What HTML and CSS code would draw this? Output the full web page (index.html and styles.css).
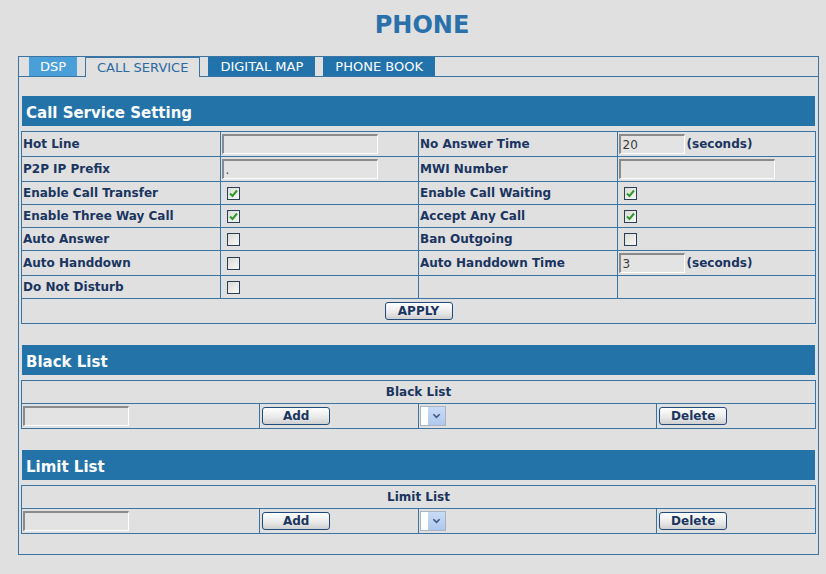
FILE: index.html
```html
<!DOCTYPE html>
<html lang="en">
<head>
  <meta charset="UTF-8" />
  <title>PHONE</title>
  <link rel="stylesheet" href="styles.css">
</head>
<body>

  <h1 class="title">PHONE</h1>

  <div class="frame">
    <div class="tabs">
      <span class="tab tab--light">DSP</span>
      <span class="tab tab--active">CALL SERVICE</span>
      <span class="tab">DIGITAL MAP</span>
      <span class="tab">PHONE BOOK</span>
    </div>

    <div class="bar bar--first">Call Service Setting</div>
    <table class="grid">
      <tr class="row-input">
        <td class="label">Hot Line</td>
        <td><input class="field" type="text" value=""></td>
        <td class="label">No Answer Time</td>
        <td><input class="field field--short" type="text" value="20"><span class="unit">(seconds)</span></td>
      </tr>
      <tr class="row-input">
        <td class="label">P2P IP Prefix</td>
        <td><input class="field" type="text" value="."></td>
        <td class="label">MWI Number</td>
        <td><input class="field" type="text" value=""></td>
      </tr>
      <tr>
        <td class="label">Enable Call Transfer</td>
        <td><span class="chk chk--on"><svg viewBox="0 0 11 11"><path d="M2 5.5 L4.5 8 L9 2.5" /></svg></span></td>
        <td class="label">Enable Call Waiting</td>
        <td><span class="chk chk--on"><svg viewBox="0 0 11 11"><path d="M2 5.5 L4.5 8 L9 2.5" /></svg></span></td>
      </tr>
      <tr>
        <td class="label">Enable Three Way Call</td>
        <td><span class="chk chk--on"><svg viewBox="0 0 11 11"><path d="M2 5.5 L4.5 8 L9 2.5" /></svg></span></td>
        <td class="label">Accept Any Call</td>
        <td><span class="chk chk--on"><svg viewBox="0 0 11 11"><path d="M2 5.5 L4.5 8 L9 2.5" /></svg></span></td>
      </tr>
      <tr>
        <td class="label">Auto Answer</td>
        <td><span class="chk"></span></td>
        <td class="label">Ban Outgoing</td>
        <td><span class="chk"></span></td>
      </tr>
      <tr class="row-tall">
        <td class="label">Auto Handdown</td>
        <td><span class="chk"></span></td>
        <td class="label">Auto Handdown Time</td>
        <td><input class="field field--short" type="text" value="3"><span class="unit">(seconds)</span></td>
      </tr>
      <tr>
        <td class="label">Do Not Disturb</td>
        <td><span class="chk"></span></td>
        <td></td>
        <td></td>
      </tr>
      <tr class="row-tall">
        <td class="center" colspan="4"><button class="btn btn--apply">APPLY</button></td>
      </tr>
    </table>

    <div class="bar">Black List</div>
    <table class="grid list">
      <colgroup>
        <col class="col-wide"><col class="col-narrow"><col class="col-wide"><col class="col-narrow">
      </colgroup>
      <tr>
        <td class="label center" colspan="4">Black List</td>
      </tr>
      <tr class="row-input">
        <td><input class="field field--list" type="text" value=""></td>
        <td><button class="btn">Add</button></td>
        <td><span class="dropdown"><span class="dropdown__arrow"><svg viewBox="0 0 10 6"><path d="M1.5 1 L5 4.5 L8.5 1" /></svg></span></span></td>
        <td><button class="btn">Delete</button></td>
      </tr>
    </table>

    <div class="bar">Limit List</div>
    <table class="grid list">
      <colgroup>
        <col class="col-wide"><col class="col-narrow"><col class="col-wide"><col class="col-narrow">
      </colgroup>
      <tr>
        <td class="label center" colspan="4">Limit List</td>
      </tr>
      <tr class="row-input">
        <td><input class="field field--list" type="text" value=""></td>
        <td><button class="btn">Add</button></td>
        <td><span class="dropdown"><span class="dropdown__arrow"><svg viewBox="0 0 10 6"><path d="M1.5 1 L5 4.5 L8.5 1" /></svg></span></span></td>
        <td><button class="btn">Delete</button></td>
      </tr>
    </table>
  </div>

</body>
</html>
```

FILE: styles.css
```css
html, body {
  margin: 0;
  padding: 0;
  background: #e0e0e0;
  font-family: "DejaVu Sans", Verdana, sans-serif;
  color: #1a3560;
}

.title {
  margin: 0;
  padding-top: 11px;
  padding-left: 18px;
  height: 56px;
  box-sizing: border-box;
  text-align: center;
  font-size: 24px;
  font-weight: bold;
  color: #2a70aa;
}

.frame {
  margin-left: 18px;
  width: 799px;
  height: 497px;
  border: 1px solid #3a74a2;
}

.tabs {
  display: flex;
  gap: 8px;
  height: 19px;
  padding-left: 10px;
  border-bottom: 1px solid #3a74a2;
}

.tab {
  display: flex;
  align-items: center;
  justify-content: center;
  height: 19px;
  padding: 0 12px;
  background: #2272ac;
  color: #ffffff;
  font-size: 13px;
  white-space: nowrap;
}

.tab--light {
  background: #4b9fd9;
  width: 24px;
}

.tab--active {
  background: #e0e0e0;
  color: #2a6aa0;
  height: 20px;
  box-sizing: border-box;
  border: 1px solid #3a74a2;
  border-bottom: none;
  padding: 0 11px;
  margin-bottom: -1px;
}

.bar {
  margin: 21px 3px 0 3px;
  height: 30px;
  padding: 3px 0 0 4px;
  box-sizing: border-box;
  display: flex;
  align-items: center;
  background: #2373a8;
  color: #ffffff;
  font-size: 15px;
  font-weight: bold;
}

.bar--first {
  margin-top: 19px;
}

.grid {
  margin: 5px 0 0 2px;
  width: 795px;
  border-collapse: collapse;
  table-layout: fixed;
}

.grid td {
  border: 1px solid #3a74a2;
  padding: 0 1px;
  height: 22px;
  font-size: 12px;
  vertical-align: middle;
  white-space: nowrap;
}

.grid .row-input td {
  height: 24px;
}

.grid .row-tall td {
  height: 24px;
}

.label {
  font-weight: bold;
}

.center {
  text-align: center;
}

.unit {
  margin-left: 2px;
  font-weight: bold;
  font-size: 12px;
}

.field {
  box-sizing: border-box;
  width: 156px;
  height: 20px;
  margin: 0;
  padding: 0 2px;
  border-style: solid;
  border-width: 2px 1px 1px 2px;
  border-color: #8a8a8a #ffffff #ffffff #8a8a8a;
  background: #e3e3e3;
  font-family: "DejaVu Sans", Verdana, sans-serif;
  font-size: 12px;
  color: #3a3a3a;
  vertical-align: middle;
}

.field--short {
  width: 66px;
}

.field--list {
  width: 106px;
}

.chk {
  display: inline-block;
  width: 13px;
  height: 13px;
  margin-left: 5px;
  box-sizing: border-box;
  border: 1px solid #2a3f58;
  background: linear-gradient(135deg, #dcdcd6, #f8f8f8);
  vertical-align: middle;
}

.chk svg {
  display: block;
  width: 11px;
  height: 11px;
  fill: none;
  stroke: #2c9a2c;
  stroke-width: 2;
}

.btn {
  height: 18px;
  width: 68px;
  padding: 0;
  border: 1px solid #1f4b7e;
  border-radius: 3px;
  background: linear-gradient(#ffffff, #e8e8e8 60%, #cfcfcf);
  font-family: "DejaVu Sans", Verdana, sans-serif;
  font-size: 12px;
  font-weight: bold;
  color: #1a3560;
  vertical-align: middle;
  margin-left: 1px;
}

.btn--apply {
  margin-left: 0;
}

.col-wide {
  width: 30%;
}

.col-narrow {
  width: 20%;
}

.dropdown {
  display: inline-flex;
  box-sizing: border-box;
  width: 26px;
  height: 20px;
  border: 1px solid #a9b4c2;
  background: #ffffff;
  justify-content: flex-end;
  vertical-align: middle;
}

.dropdown__arrow {
  display: flex;
  align-items: center;
  justify-content: center;
  width: 17px;
  background: linear-gradient(#c9dbf6, #b0c8ef);
}

.dropdown__arrow svg {
  width: 9px;
  height: 6px;
  fill: none;
  stroke: #3f5b85;
  stroke-width: 1.8;
}
```
